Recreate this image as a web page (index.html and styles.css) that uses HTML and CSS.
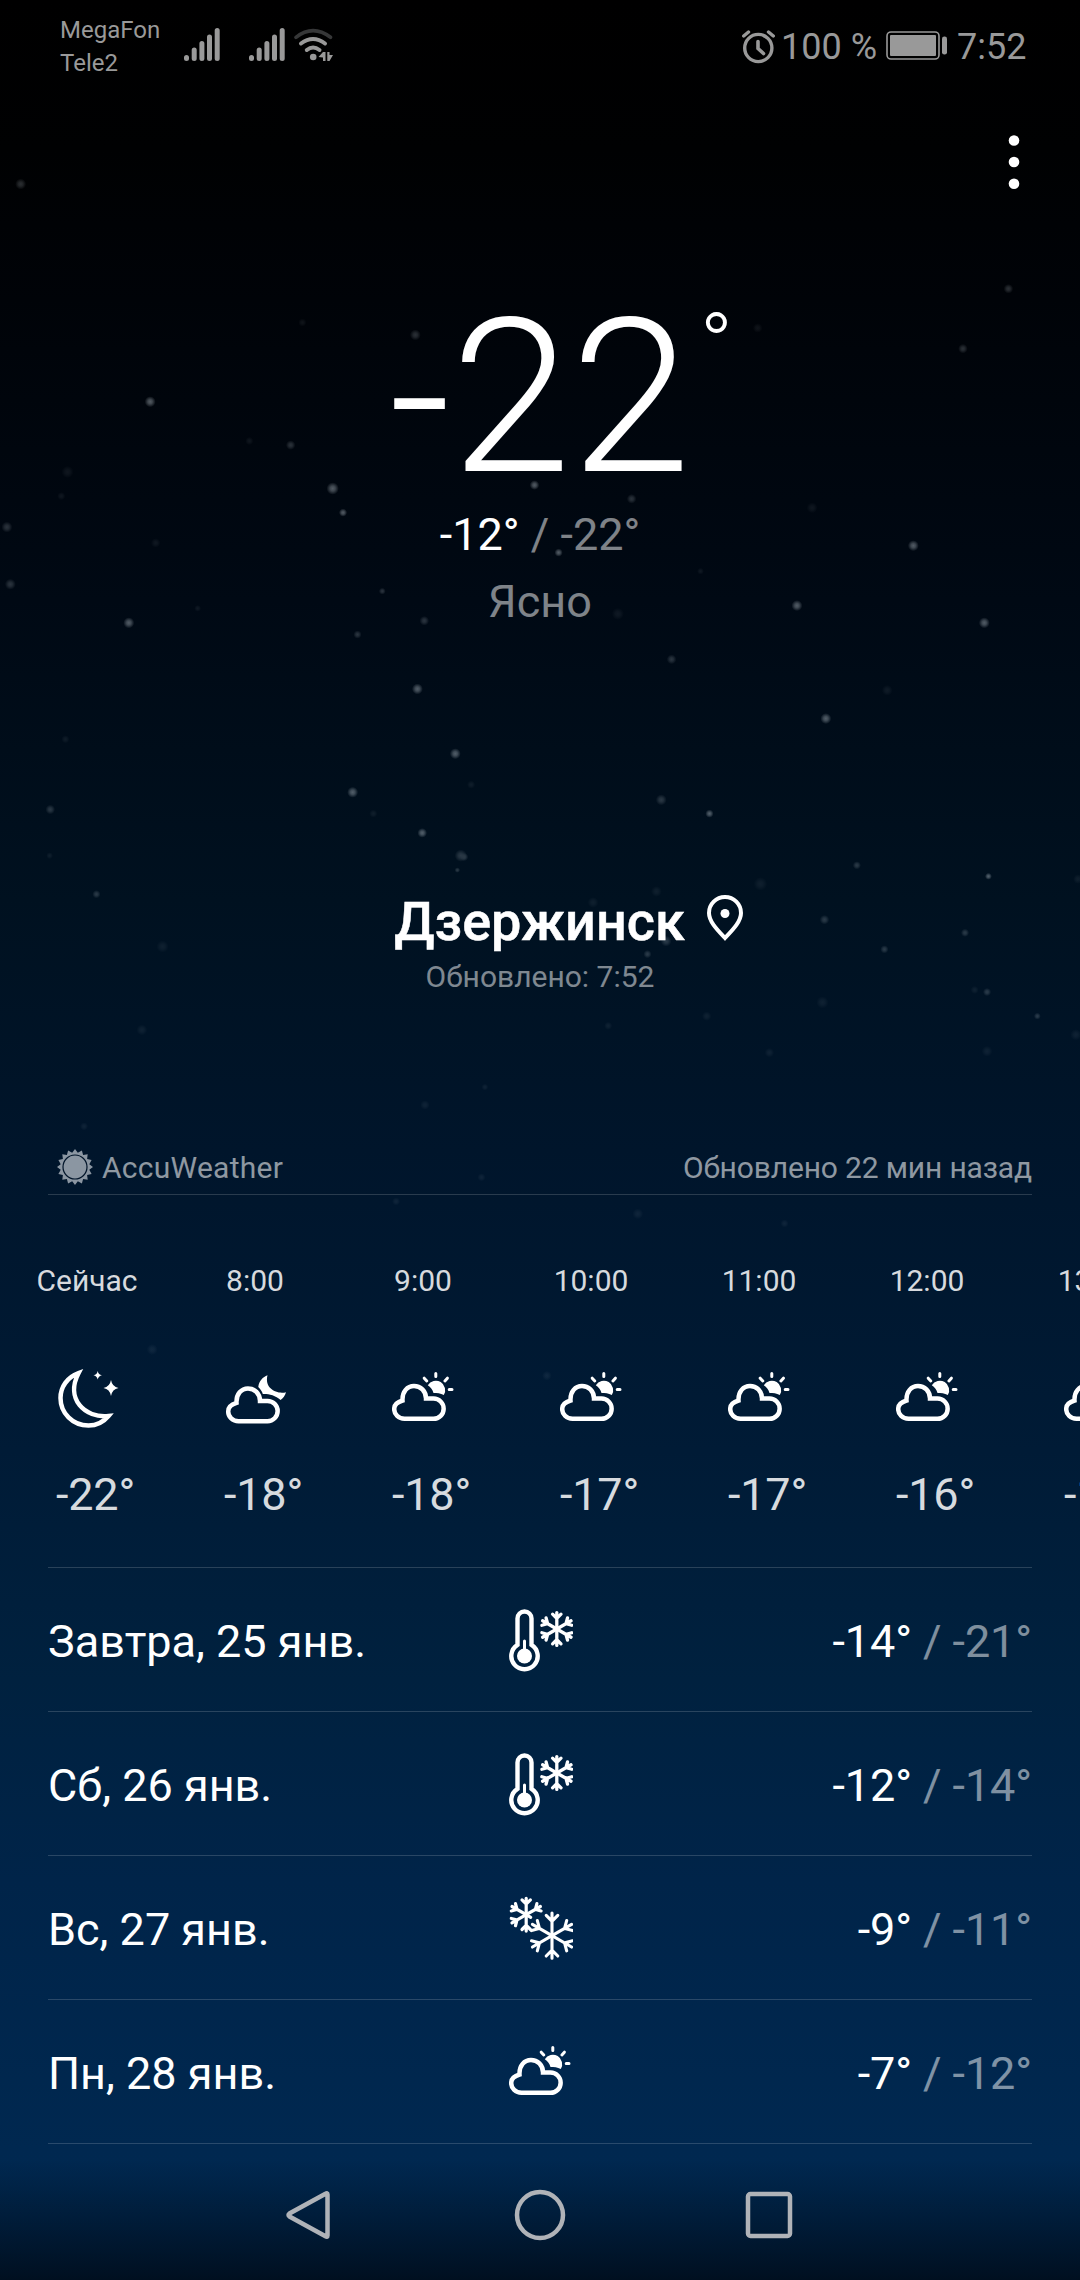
FILE: index.html
```html
<!DOCTYPE html>
<html lang="ru">
<head>
<meta charset="utf-8">
<title>Погода</title>
<link rel="stylesheet" href="styles.css">
</head>
<body>
<svg class="defs" width="0" height="0" aria-hidden="true">
  <defs>
    <symbol id="sun-cloud" viewBox="0 -6 64 64">
      <path d="M12.5 46.8H41.5a10.15 10.15 0 0 0 0-20.3H34C34 19 28.500 14 22 14S10 19.500 10.500 28.500C5.500 30 2.200 33 2.200 37c0 5.500 4.500 9.800 10.300 9.800z" fill="none" stroke="#fff" stroke-width="4.500"/>
      <path d="M35.800 13.200A8.800 8.800 0 1 1 51.800 23C48.500 21.200 45 21 41.500 21 40.500 17.500 38.500 15 35.800 13.200z" fill="#fff"/>
      <path d="M43.800 1.600V4.400M32.200 6.200L34.800 9M55.400 6.200L52.900 8.900M57.200 17.500H60" fill="none" stroke="#fff" stroke-width="3" stroke-linecap="round"/>
    </symbol>
    <symbol id="moon-cloud" viewBox="-2 -6 64 64">
      <path d="M12.500 49.200H41.500a10.150 10.150 0 0 0 0-20.300H34C34 21.400 28.500 16.400 22 16.400S10 21.900 10.500 30.900C5.500 32.400 2.200 35.400 2.200 39.400c0 5.500 4.500 9.800 10.300 9.800z" fill="none" stroke="#fff" stroke-width="4.500"/>
      <path d="M41.500 3.300C37 5 33 9 32.300 15c1.800 1.500 3.800 4.500 4.500 7 5.200-.3 12.500 1 17.800 6 2.500-1.800 4.600-4.500 5.400-7.800C51.500 22.500 38 17 41.500 3.300z" fill="#fff"/>
    </symbol>
    <symbol id="moon" viewBox="0 0 64 64">
      <path d="M22.500 7.200C11 11.500 4.500 21 4.500 32c0 15 12 27.500 28 27.500 8 0 15-3.500 20-9.500C29 52.500 9 33 22.500 7.200z" fill="none" stroke="#fff" stroke-width="4.500" stroke-miterlimit="8"/>
      <path d="M55 14q1.200 6.800 7.500 8-6.300 1.200-7.500 8-1.200-6.800-7.500-8 6.300-1.200 7.500-8zM41.700 5q.7 3.700 4.200 4.300-3.500.6-4.200 4.300-.7-3.700-4.200-4.300 3.500-.6 4.200-4.300z" fill="#fff"/>
    </symbol>
    <g id="arm"><path d="M0 0V-16.400M-4.200-14.800L0-10.600 4.200-14.800"/></g>
    <g id="arm-large"><path d="M0 0V-22.600M-5.800-20.300L0-14.500 5.800-20.300"/></g>
    <symbol id="frost" viewBox="0 0 64 64">
      <path d="M8.500 10.500a7 7 0 0 1 14 0V36.800a13.200 13.200 0 1 1-14 0z" fill="none" stroke="#fff" stroke-width="4.400"/>
      <path d="M15.500 33V44" stroke="#fff" stroke-width="3" stroke-linecap="round"/>
      <circle cx="15.500" cy="48" r="7.500" fill="#fff"/>
      <g transform="translate(47.800 21)" fill="none" stroke="#fff" stroke-width="3.300" stroke-linecap="round">
        <use href="#arm"/><use href="#arm" transform="rotate(60)"/><use href="#arm" transform="rotate(120)"/><use href="#arm" transform="rotate(180)"/><use href="#arm" transform="rotate(240)"/><use href="#arm" transform="rotate(300)"/>
      </g>
    </symbol>
    <symbol id="snow" viewBox="0 0 64 64">
      <g transform="translate(17.200 18.700)" fill="none" stroke="#fff" stroke-width="3.200" stroke-linecap="round">
        <use href="#arm"/><use href="#arm" transform="rotate(60)"/><path d="M0 0L4.500 2.600"/><use href="#arm" transform="rotate(180)"/><use href="#arm" transform="rotate(240)"/><use href="#arm" transform="rotate(300)"/>
      </g>
      <g transform="translate(43 39.700)" fill="none" stroke="#fff" stroke-width="3.100" stroke-linecap="round">
        <use href="#arm-large"/><use href="#arm-large" transform="rotate(60)"/><use href="#arm-large" transform="rotate(120)"/><use href="#arm-large" transform="rotate(180)"/><use href="#arm-large" transform="rotate(240)"/><use href="#arm-large" transform="rotate(300)"/>
      </g>
    </symbol>
    <symbol id="signal" viewBox="0 0 36 34">
      <path d="M2.500 29.500V30.500M10.200 22V30.500M17.900 15.500V30.500M25.500 9V30.500M33.200 2.500V30.500" stroke="#999" stroke-width="5" stroke-linecap="round"/>
    </symbol>
    <radialGradient id="glow">
      <stop offset="0" stop-color="#c3ced6"/>
      <stop offset=".4" stop-color="#c3ced6" stop-opacity=".75"/>
      <stop offset="1" stop-color="#c3ced6" stop-opacity="0"/>
    </radialGradient>
  </defs>
</svg>

<div class="screen">
  <svg class="stars" viewBox="0 0 1080 2280" aria-hidden="true">
    <g transform="translate(0 120) scale(.6888)" fill="url(#glow)">
      <g opacity=".42">
        <circle cx="483" cy="535" r="9"/><circle cx="187" cy="730" r="8"/><circle cx="1326" cy="618" r="8"/><circle cx="1429" cy="730" r="8"/><circle cx="1199" cy="869" r="8"/><circle cx="776" cy="530" r="7"/><circle cx="606" cy="826" r="8"/><circle cx="661" cy="920" r="8"/><circle cx="512" cy="976" r="8"/><circle cx="1157" cy="705" r="8"/><circle cx="1030" cy="1007" r="6"/><circle cx="1435" cy="1098" r="5"/><circle cx="613" cy="1035" r="7"/><circle cx="218" cy="409" r="8"/><circle cx="498" cy="570" r="6"/><circle cx="811" cy="628" r="6"/>
      </g>
      <g opacity=".22">
        <circle cx="30" cy="93" r="8"/><circle cx="1464" cy="245" r="7"/><circle cx="1398" cy="332" r="7"/><circle cx="603" cy="312" r="8"/><circle cx="422" cy="472" r="7"/><circle cx="10" cy="591" r="8"/><circle cx="15" cy="674" r="8"/><circle cx="616" cy="727" r="7"/><circle cx="519" cy="747" r="6"/><circle cx="555" cy="684" r="5"/><circle cx="975" cy="783" r="7"/><circle cx="960" cy="987" r="8"/><circle cx="73" cy="1001" r="7"/><circle cx="669" cy="1068" r="9"/><circle cx="674" cy="1070" r="6"/><circle cx="664" cy="1089" r="4"/><circle cx="1197" cy="1161" r="7"/><circle cx="1244" cy="1082" r="6"/><circle cx="1401" cy="1180" r="6"/><circle cx="1433" cy="1266" r="6"/><circle cx="1506" cy="1301" r="5"/><circle cx="940" cy="1211" r="6"/><circle cx="967" cy="1192" r="8"/><circle cx="140" cy="1124" r="6"/><circle cx="1284" cy="1204" r="6"/><circle cx="917" cy="550" r="7"/>
      </g>
      <g opacity=".08">
        <circle cx="98" cy="511" r="9"/><circle cx="89" cy="546" r="6"/><circle cx="362" cy="466" r="6"/><circle cx="439" cy="294" r="6"/><circle cx="1100" cy="302" r="7"/><circle cx="226" cy="614" r="7"/><circle cx="287" cy="709" r="5"/><circle cx="1179" cy="563" r="8"/><circle cx="1017" cy="655" r="5"/><circle cx="897" cy="717" r="9"/><circle cx="1288" cy="828" r="8"/><circle cx="95" cy="899" r="6"/><circle cx="684" cy="965" r="6"/><circle cx="542" cy="1007" r="6"/><circle cx="72" cy="1068" r="5"/><circle cx="236" cy="1200" r="9"/><circle cx="1104" cy="1109" r="10"/><circle cx="953" cy="1120" r="8"/><circle cx="861" cy="1136" r="8"/><circle cx="1194" cy="1281" r="9"/><circle cx="1026" cy="1301" r="7"/><circle cx="1415" cy="1263" r="6"/><circle cx="206" cy="1321" r="8"/><circle cx="1117" cy="1354" r="7"/><circle cx="1433" cy="1352" r="8"/><circle cx="883" cy="1315" r="6"/><circle cx="1562" cy="1328" r="8"/><circle cx="1565" cy="1102" r="7"/><circle cx="617" cy="1430" r="7"/><circle cx="704" cy="1404" r="5"/><circle cx="122" cy="1461" r="6"/><circle cx="699" cy="1535" r="6"/><circle cx="575" cy="1570" r="6"/><circle cx="926" cy="1588" r="8"/><circle cx="1139" cy="1602" r="6"/><circle cx="221" cy="1785" r="8"/><circle cx="794" cy="1823" r="7"/>
      </g>
    </g>
  </svg>

  <header class="status">
    <div class="carriers"><span>MegaFon</span><span>Tele2</span></div>
    <svg class="signal" viewBox="0 0 36 34"><use href="#signal"/></svg>
    <svg class="signal signal-second" viewBox="0 0 36 34"><use href="#signal"/></svg>
    <svg class="wifi" viewBox="0 0 40 34" fill="none" stroke="#999" stroke-width="4" stroke-linecap="round">
      <path d="M2 9.300Q19-4 36.500 9.300" stroke="#363738" stroke-width="3.600"/>
      <path d="M7 15.500Q19 6.500 31 15.500M12.800 22Q19 17 25.500 22"/>
      <circle cx="19.200" cy="29" r="3.300" fill="#999" stroke="none"/>
      <path d="M24.500 29L29 24H31.500V33H29V29.500zM33.300 24H35.500V27H39L35.500 33H33.300z" fill="#999" stroke="none"/>
    </svg>
    <svg class="alarm" viewBox="0 0 34 34" fill="none" stroke="#999" stroke-width="3.400" stroke-linecap="round">
      <circle cx="16.300" cy="18" r="13.600"/>
      <path d="M16 11.500V18.500L21.500 23.500" stroke-width="3.600"/>
      <path d="M1.700 6L6.500 2M26.500 2L31.300 6"/>
    </svg>
    <span class="charge">100 %</span>
    <svg class="battery" viewBox="0 0 62 30">
      <rect x="1" y="1" width="52" height="27" rx="4" fill="none" stroke="#999" stroke-width="1.600"/>
      <rect x="4" y="4" width="46" height="21" rx="1" fill="#999"/>
      <rect x="56" y="5.500" width="5" height="18" rx="2.300" fill="#999"/>
    </svg>
    <span class="clock">7:52</span>
  </header>

  <div class="toolbar">
    <svg class="menu" viewBox="0 0 12 56" fill="#fff"><circle cx="6" cy="6.500" r="5.300"/><circle cx="6" cy="28" r="5.300"/><circle cx="6" cy="49.700" r="5.300"/></svg>
  </div>

  <main>
    <section class="current">
      <div class="temperature">-22<span class="degree">°</span></div>
      <div class="range">-12° <span class="muted">/ -22°</span></div>
      <div class="condition muted">Ясно</div>
    </section>

    <section class="place">
      <h1 class="city">Дзержинск
        <svg class="pin" viewBox="0 0 36 46" fill="none" stroke="#fff" stroke-width="4"><path d="M18 43C10 34.500 2 26.500 2 18a16 16 0 0 1 32 0c0 8.500-8 16.500-16 25z"/><circle cx="18" cy="18.500" r="4.500" fill="#fff" stroke="none"/></svg>
      </h1>
      <div class="updated muted">Обновлено: 7:52</div>
    </section>

    <section class="provider">
      <span class="brand">
        <svg class="brand-icon" viewBox="-18 -18 36 36" fill="#8b96a2">
          <path d="M0-18L2.800-14.300 6.900-16.600 8.100-12.100 12.700-12.700 12.100-8.100 16.600-6.900 14.300-2.800 18 0 14.300 2.800 16.600 6.900 12.100 8.100 12.700 12.700 8.100 12.100 6.900 16.600 2.800 14.300 0 18-2.800 14.300-6.900 16.600-8.100 12.100-12.700 12.700-12.100 8.100-16.600 6.900-14.300 2.800-18 0-14.300-2.800-16.600-6.900-12.100-8.100-12.700-12.700-8.100-12.100-6.900-16.600-2.800-14.300z"/>
          <circle r="12" fill="none" stroke="#001429" stroke-width="1.200"/>
        </svg>
        <span class="brand-name">AccuWeather</span>
      </span>
      <span class="age">Обновлено 22 мин назад</span>
    </section>

    <section class="hours">
      <div class="hour"><span class="time">Сейчас</span><svg class="hour-icon"><use href="#moon"/></svg><span class="hour-temp">-22°</span></div>
      <div class="hour"><span class="time">8:00</span><svg class="hour-icon"><use href="#moon-cloud"/></svg><span class="hour-temp">-18°</span></div>
      <div class="hour"><span class="time">9:00</span><svg class="hour-icon"><use href="#sun-cloud"/></svg><span class="hour-temp">-18°</span></div>
      <div class="hour"><span class="time">10:00</span><svg class="hour-icon"><use href="#sun-cloud"/></svg><span class="hour-temp">-17°</span></div>
      <div class="hour"><span class="time">11:00</span><svg class="hour-icon"><use href="#sun-cloud"/></svg><span class="hour-temp">-17°</span></div>
      <div class="hour"><span class="time">12:00</span><svg class="hour-icon"><use href="#sun-cloud"/></svg><span class="hour-temp">-16°</span></div>
      <div class="hour"><span class="time">13:00</span><svg class="hour-icon"><use href="#sun-cloud"/></svg><span class="hour-temp">-16°</span></div>
    </section>

    <section class="days">
      <div class="day"><span>Завтра, 25 янв.</span><svg class="day-icon"><use href="#frost"/></svg><span class="day-range">-14° <span class="muted">/ -21°</span></span></div>
      <div class="day"><span>Сб, 26 янв.</span><svg class="day-icon"><use href="#frost"/></svg><span class="day-range">-12° <span class="muted">/ -14°</span></span></div>
      <div class="day"><span>Вс, 27 янв.</span><svg class="day-icon"><use href="#snow"/></svg><span class="day-range">-9° <span class="muted">/ -11°</span></span></div>
      <div class="day"><span>Пн, 28 янв.</span><svg class="day-icon"><use href="#sun-cloud"/></svg><span class="day-range">-7° <span class="muted">/ -12°</span></span></div>
    </section>
  </main>

  <nav class="navbar">
    <svg class="nav-icon" viewBox="0 0 52 52"><path d="M42.500 5.500V46.500Q42.500 48.500 40.500 47.300L4.500 27.500Q2.500 26 4.500 24.500L40.500 4.700Q42.500 3.500 42.500 5.500z"/></svg>
    <svg class="nav-icon" viewBox="0 0 52 52"><circle cx="26" cy="26" r="23"/></svg>
    <svg class="nav-icon" viewBox="0 0 52 52"><rect x="5" y="5" width="42" height="42" rx="2.500"/></svg>
  </nav>
</div>
</body>
</html>
```
FILE: styles.css
```css
* {
  box-sizing: border-box;
}

body {
  margin: 0;
  background: #000;
  font-family: Roboto, "Noto Sans", sans-serif;
  color: #fff;
}

.defs {
  position: absolute;
}

.screen {
  position: relative;
  display: flex;
  flex-direction: column;
  width: 1080px;
  height: 2280px;
  overflow: hidden;
  background:
    linear-gradient(to bottom, transparent 2160px, rgba(0, 5, 12, 0.72) 2280px),
    linear-gradient(to bottom, #000 0, #000102 150px, #000308 300px, #000914 600px, #001120 900px, #00152b 1150px, #001b36 1450px, #00213f 1680px, #002449 1880px, #002850 2150px, #002a54 2280px);
}

.stars {
  position: absolute;
  top: 0;
  left: 0;
  width: 1080px;
  height: 2280px;
}

.status,
.toolbar,
main,
.navbar {
  position: relative;
}

svg {
  display: block;
  flex: none;
}

.muted {
  color: rgba(255, 255, 255, 0.5);
}

.status {
  display: flex;
  height: 93px;
  align-items: center;
  padding-left: 60px;
  color: #999;
  font-size: 36px;
}

.carriers {
  display: flex;
  flex-direction: column;
  width: 124px;
  font-size: 24px;
  line-height: 33px;
}

.signal {
  width: 36px;
  height: 34px;
  margin-top: -4px;
}

.signal-second {
  margin-left: 29px;
}

.wifi {
  width: 40px;
  height: 34px;
  margin: -4px 0 0 9px;
}

.alarm {
  width: 34px;
  height: 34px;
  margin-left: 408px;
}

.charge {
  width: 110px;
  padding-left: 5px;
  white-space: nowrap;
}

.battery {
  width: 62px;
  height: 30px;
  margin-top: -2px;
}

.clock {
  padding-left: 9px;
}

.toolbar {
  display: flex;
  justify-content: flex-end;
  height: 197px;
  padding: 41px 60px 0 0;
}

.menu {
  width: 12px;
  height: 56px;
}

.current {
  display: flex;
  flex-direction: column;
  align-items: center;
  height: 597px;
  font-size: 45px;
  line-height: 60px;
}

.temperature {
  display: flex;
  align-items: flex-start;
  padding-left: 42px;
  font-size: 216px;
  font-weight: 300;
  line-height: 216px;
}

.degree {
  padding-left: 9px;
  font-size: 88px;
  line-height: 110px;
}

.range {
  margin-top: -1px;
}

.condition {
  margin-top: 7px;
}

.place {
  display: flex;
  flex-direction: column;
  align-items: center;
  height: 261px;
}

.city {
  display: flex;
  align-items: flex-start;
  gap: 22px;
  margin: 0;
  padding-left: 57px;
  font-size: 54px;
  font-weight: 500;
  line-height: 70px;
  -webkit-text-stroke: 0.5px #fff;
}

.pin {
  width: 36px;
  height: 46px;
  margin-top: 8px;
}

.updated {
  font-size: 30px;
  line-height: 40px;
}

.provider {
  display: flex;
  justify-content: space-between;
  height: 47px;
  margin: 0 48px;
  border-bottom: 1px solid rgba(255, 255, 255, 0.16);
  color: rgba(255, 255, 255, 0.56);
  font-size: 30px;
  line-height: 40px;
}

.brand {
  display: flex;
  gap: 9px;
  padding-left: 9px;
}

.brand-icon {
  width: 36px;
  height: 36px;
  margin-top: 1px;
}

.brand-name {
  letter-spacing: 0.25px;
}

.age {
  letter-spacing: -0.15px;
}

.hours {
  display: flex;
  height: 372px;
  padding: 66px 0 0 3px;
}

.hour {
  display: flex;
  flex: none;
  flex-direction: column;
  width: 168px;
  color: rgba(255, 255, 255, 0.85);
}

.time {
  font-size: 30px;
  line-height: 40px;
  text-align: center;
}

.hour-icon {
  width: 64px;
  height: 64px;
  margin: 65px 0 0 53px;
}

.hour-temp {
  margin-top: 35px;
  padding-left: 53px;
  font-size: 45px;
  line-height: 60px;
  letter-spacing: -0.2px;
}

.days {
  margin: 0 48px;
  border-top: 1px solid rgba(255, 255, 255, 0.16);
}

.day {
  display: grid;
  grid-template-columns: 461px 64px 1fr;
  align-items: center;
  height: 144px;
  padding-top: 4px;
  border-bottom: 1px solid rgba(255, 255, 255, 0.16);
  font-size: 45px;
  line-height: 60px;
}

.day-icon {
  width: 64px;
  height: 64px;
  margin-top: -4px;
}

.day-range {
  text-align: right;
  letter-spacing: -0.1px;
}

.navbar {
  display: flex;
  justify-content: center;
  gap: 177px;
  padding-top: 45px;
}

.nav-icon {
  width: 52px;
  height: 52px;
  fill: none;
  stroke: #b0b3b8;
  stroke-width: 4.5;
}
```
